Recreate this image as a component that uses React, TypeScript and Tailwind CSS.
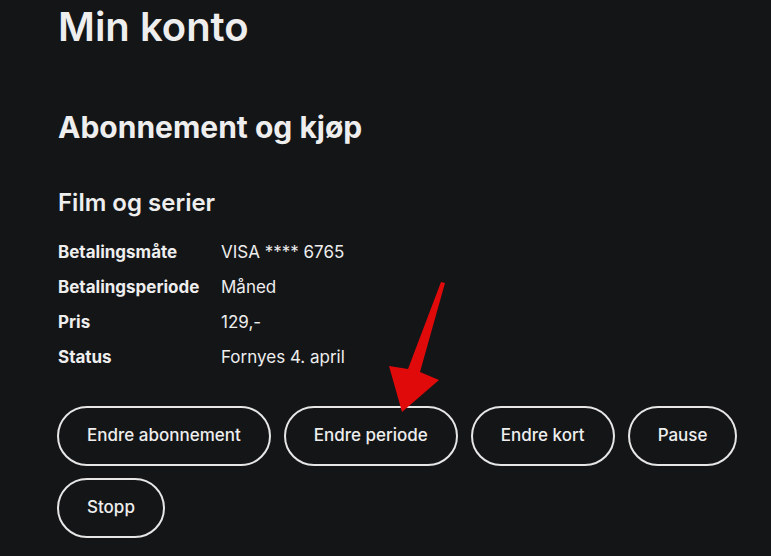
import React from "react";

const rows: [string, string][] = [
  ["Betalingsmåte", "VISA **** 6765"],
  ["Betalingsperiode", "Måned"],
  ["Pris", "129,-"],
  ["Status", "Fornyes 4. april"],
];

const actions = ["Endre abonnement", "Endre periode", "Endre kort", "Pause", "Stopp"];

export default function App() {
  return (
    <div className="relative w-[771px] h-[556px] overflow-hidden bg-[#141517] text-[#eeeeee] font-['Inter','Noto_Sans',sans-serif]">
      <div className="pl-[58px] pt-[3px]">
        <h1 className="text-[40px] leading-[48px] font-semibold">Min konto</h1>

        <h2 className="mt-[59px] text-[30px] leading-[35px] font-bold">Abonnement og kjøp</h2>

        <h3 className="mt-[43px] text-[24px] leading-[29px] font-semibold">Film og serier</h3>

        {/* Subscription details */}
        <div className="mt-[18px] grid grid-cols-[163px_1fr] text-[17px] leading-[35px]">
          {rows.map(([label, value]) => (
            <React.Fragment key={label}>
              <div className="font-bold">{label}</div>
              <div>{value}</div>
            </React.Fragment>
          ))}
        </div>

        <div className="mt-[31px] -ml-px flex flex-wrap gap-x-[13px] gap-y-[12px]">
          {actions.map(a => (
            <button
              key={a}
              className="h-[60px] px-[28px] rounded-full border-2 border-[#e6e6e6] text-[17px] font-medium text-[#eeeeee]"
            >
              {a}
            </button>
          ))}
        </div>
      </div>

      {/* Annotation arrow */}
      <svg className="absolute left-0 top-0 pointer-events-none" width="771" height="556" viewBox="0 0 771 556">
        <polygon points="441,282 445,283 420,372 439,380 402,412 389,366 408,369" fill="#e00a0a" />
      </svg>
    </div>
  );
}
